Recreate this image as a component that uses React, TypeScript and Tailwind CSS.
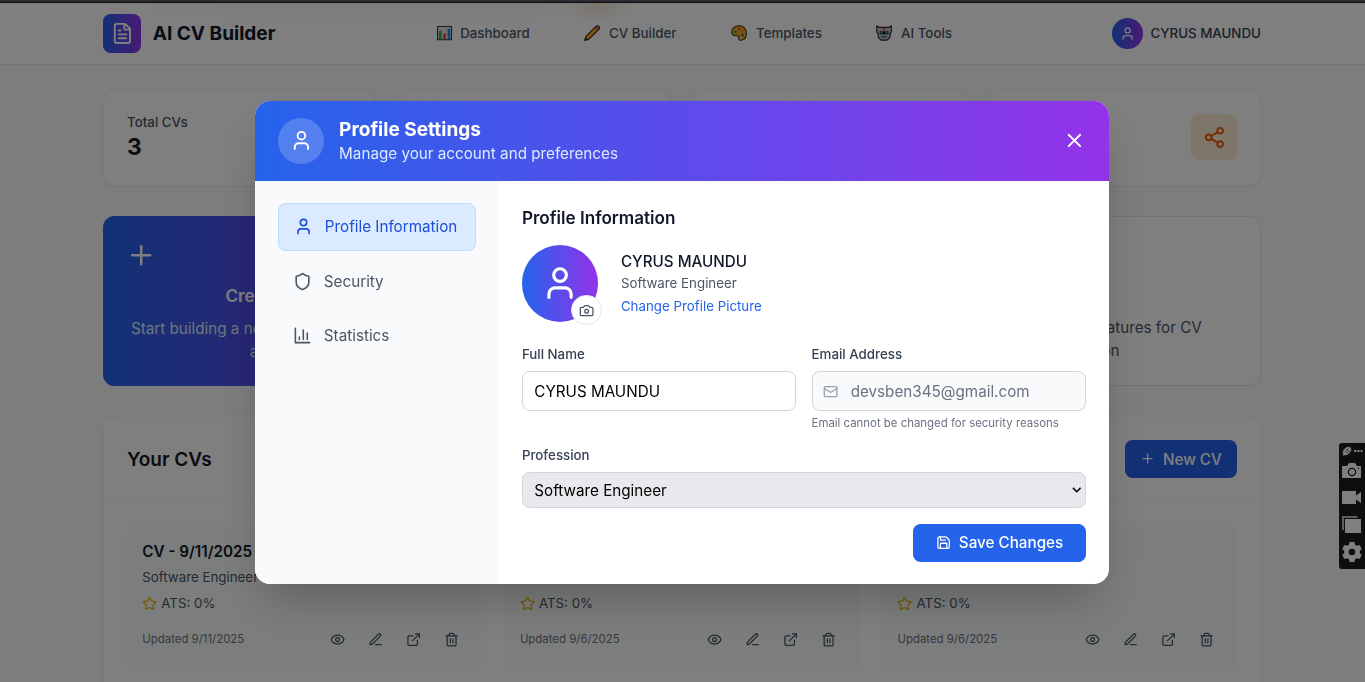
import React from "react";
import {
  Camera,
  ExternalLink,
  Eye,
  FileText,
  Mail,
  Plus,
  Save,
  Share2,
  Shield,
  Star,
  Trash2,
  User,
  X,
} from "lucide-react";

function ChartEmoji() {
  return (
    <svg viewBox="0 0 16 16" className="h-[17px] w-[16px]">
      <rect x=".6" y="1" width="14.6" height="14" fill="#dcdce0" stroke="#26262b" strokeWidth="1" />
      <rect x="2.2" y="5.600" width="2.6" height="8.900" fill="#2fae2f" />
      <rect x="6.600" y="8.4" width="2.6" height="6.1" fill="#f0402f" />
      <rect x="11.2" y="3.4" width="2.6" height="11.1" fill="#1c8ff0" />
    </svg>
  );
}

function PencilEmoji() {
  return (
    <svg viewBox="0 0 16 16" className="-ml-px mr-px h-[17px] w-[17px]">
      <path d="M.8 15.200l1-3.800L11.800 1.300Q13.200.2 14.600 1.400Q15.800 2.800 14.700 4.200L4.600 14.200z" fill="#f7b616" stroke="#2a2018" strokeWidth="1.100" strokeLinejoin="round" />
      <path d="M11.800 1.300Q13.200.2 14.600 1.400Q15.800 2.800 14.700 4.200L13.700 5.200 10.900 2.200z" fill="#f0607a" stroke="#2a2018" strokeWidth=".6" />
      <path d="M.8 15.200l.9-3 2.100 2.100z" fill="#2a2018" />
    </svg>
  );
}

function PaletteEmoji() {
  return (
    <svg viewBox="0 0 16 16" className="-ml-px mr-px h-[17px] w-[17px]">
      <path d="M8 .8C3.800.8.700 3.400.700 6.700c0 2.500 1.700 3.900 3.800 3.900 1.600 0 2.700-.2 3.200.6.6 1-.6 1.900 0 3 .4.8 1.300 1 2.300.9 3.200-.4 5.300-3.300 5.300-7C15.300 4 12.200.8 8 .8z" fill="#f5ad18" stroke="#3a2a10" strokeWidth="1" />
      <circle cx="4.300" cy="6.600" r="1.500" fill="#35b044" />
      <circle cx="8.100" cy="4" r="1.500" fill="#ee4438" />
      <circle cx="11.900" cy="5.600" r="1.300" fill="#e99018" />
      <circle cx="11.400" cy="9.800" r="1.500" fill="#2672e6" />
      <circle cx="9.800" cy="12.800" r="1" fill="#d8d8da" />
    </svg>
  );
}

function RobotEmoji() {
  return (
    <svg viewBox="0 0 16 16" className="-ml-px mr-px h-[17px] w-[17px]">
      <path d="M.8.800l2.400 1.600h9.600l2.400-1.600v6l-1 1.200-.5 4.200L11 15H5l-2.700-2.800L1.800 8l-1-1.200z" fill="#c0c2c9" stroke="#26262a" strokeWidth="1.100" strokeLinejoin="round" />
      <path d="M7.200 2.600h1.600v3H7.200z" fill="#ee4438" />
      <path d="M3.600 6.300h8.800v3H3.600z" fill="#1c1c20" />
      <path d="M4.600 7h1.700v1.500H4.600zM9.700 7h1.700v1.500H9.700z" fill="#35c8f0" />
      <path d="M5.600 11.700h4.800" stroke="#303036" strokeWidth="1.100" />
    </svg>
  );
}

const navItems = [
  { label: "Dashboard", icon: <ChartEmoji />, className: "w-[99px]" },
  { label: "CV Builder", icon: <PencilEmoji />, className: "w-[98px]" },
  { label: "Templates", icon: <PaletteEmoji />, className: "w-[96px]" },
  { label: "AI Tools", icon: <RobotEmoji />, className: "w-[80px]" },
];

function Header() {
  return (
    <header className="h-[65px] border-b border-gray-200 bg-white bg-[radial-gradient(ellipse_34px_20px_at_628px_2px,#f4ead6,transparent),radial-gradient(ellipse_300px_24px_at_400px_0px,#f6f6f8,transparent)] pr-px">
      <div className="mx-auto flex h-16 w-[1216px] items-center justify-between">
        <div className="flex w-[351px] items-center gap-3">
          <div className="flex h-10 w-10 items-center justify-center rounded-lg bg-linear-to-r/srgb from-[#2563eb] to-[#9333ea] text-white">
            <FileText size={24} />
          </div>
          <span className="pt-px text-xl font-bold text-gray-900">AI CV Builder</span>
        </div>
        <nav className="flex flex-1 gap-[56.4px]">
          {navItems.map((item) => (
            <a key={item.label} className={`flex items-center gap-2 text-sm font-medium whitespace-nowrap text-gray-600 ${item.className}`}>
              {item.icon}
              {item.label}
            </a>
          ))}
        </nav>
        <div className="flex items-center gap-2">
          <div className="flex h-8 w-8 items-center justify-center rounded-full bg-linear-to-r/srgb from-[#2563eb] to-[#9333ea] text-white">
            <User size={16} />
          </div>
          <span className="text-sm font-medium text-gray-700">CYRUS MAUNDU</span>
        </div>
      </div>
    </header>
  );
}

const cardBase = "rounded-xl border border-gray-100 bg-white shadow-xs";

function Stats() {
  return (
    <section className="mb-8 grid grid-cols-4 gap-6">
      <div className={`${cardBase} h-[101px] px-6 py-[23px]`}>
        <p className="text-sm font-medium text-gray-600">Total CVs</p>
        <p className="text-2xl font-bold text-gray-900">3</p>
      </div>
      <div className={cardBase} />
      <div className={cardBase} />
      <div className={`${cardBase} flex items-center justify-end px-6 pb-px`}>
        <div className="flex h-12 w-12 items-center justify-center rounded-lg bg-[#ffedd5] text-[#ea580c]">
          <Share2 size={24} />
        </div>
      </div>
    </section>
  );
}

function QuickActions() {
  return (
    <section className="mb-8 grid grid-cols-3 gap-6">
      <button className="flex h-[178px] flex-col rounded-xl bg-linear-to-r/srgb from-[#2563eb] to-[#9333ea] p-[25px] text-white">
        <Plus size={32} className="mb-[13px] -ml-px shrink-0" />
        <h3 className="mb-[9px] w-full text-center text-lg font-semibold">Create New CV</h3>
        <p className="-mb-1 w-full pr-px text-center whitespace-nowrap text-blue-100">
          Start building a new professional CV with AI
          <br />
          assistance
        </p>
      </button>
      <div className={cardBase} />
      <button className="flex h-[178px] flex-col rounded-xl border border-gray-200 bg-white p-6 pt-[69px]">
        <h3 className="mb-2 h-7 w-full text-lg font-semibold text-gray-900">AI Tools</h3>
        <p className="w-full pr-1 text-center whitespace-nowrap text-gray-600">
          Explore AI-powered features for CV
          <br />
          <span className="pl-1">optimization</span>
        </p>
      </button>
    </section>
  );
}

const cvs = [
  { title: "CV - 9/11/2025", role: "Software Engineer", updated: "Updated 9/11/2025" },
  { title: "CV - 9/6/2025", role: "Data Scientist", updated: "Updated 9/6/2025" },
  { title: "CV - 9/6/2025", role: "Data Scientist", updated: "Updated 9/6/2025" },
];

function EditIcon({ size }: { size: number }) {
  return (
    <svg viewBox="0 0 24 24" width={size} height={size} fill="none" stroke="currentColor" strokeWidth="2" strokeLinecap="round" strokeLinejoin="round">
      <path d="M12 20h9M16.500 3.500a2.120 2.120 0 0 1 3 3L7 19l-4 1 1-4Z" />
    </svg>
  );
}

function CvList() {
  return (
    <section className={`${cardBase} h-[400px]`}>
      <div className="flex items-center justify-between border-b border-gray-100 p-6">
        <h2 className="pt-0.5 text-xl font-semibold text-gray-900">Your CVs</h2>
        <button className="flex h-10 items-center gap-2 rounded-lg bg-[#2563eb] px-4 font-medium text-white">
          <Plus size={16} />
          <span className="pt-[2px]">New CV</span>
        </button>
      </div>
      <div className="grid grid-cols-3 gap-6 p-6">
        {cvs.map((cv, i) => (
          <article key={i} className="rounded-lg bg-[#f9fbfb] px-4 pt-[17px] pb-4">
            <h3 className="font-semibold text-gray-900">{cv.title}</h3>
            <p className="mt-1 text-sm text-gray-600">{cv.role}</p>
            <p className="mt-2 flex items-center gap-1 text-sm text-gray-600">
              <Star size={16} className="text-[#eab308]" />
              ATS: 0%
            </p>
            <div className="mt-3 flex items-center justify-between">
              <span className="text-xs text-gray-500">{cv.updated}</span>
              <div className="flex gap-2 text-gray-600">
                {[Eye, EditIcon, ExternalLink, Trash2].map((Icon, k) => (
                  <button key={k} className="p-2">
                    <Icon size={16} />
                  </button>
                ))}
              </div>
            </div>
          </article>
        ))}
      </div>
    </section>
  );
}

function ChartIcon() {
  return (
    <svg viewBox="0 0 24 24" className="h-5 w-5" fill="none" stroke="currentColor" strokeWidth="2" strokeLinecap="round" strokeLinejoin="round">
      <path d="M3 3v18h18M18 17V9M13 17V5M8 17v-3" />
    </svg>
  );
}

function ProfileModal() {
  return (
    <div className="w-[896.6px] overflow-hidden rounded-2xl bg-white shadow-2xl">
      <div className="flex h-[84px] items-center justify-between bg-linear-to-r/srgb from-[#2563eb] to-[#9333ea] px-6 text-white">
        <div className="flex items-center gap-4">
          <div className="flex h-12 w-12 items-center justify-center rounded-full bg-white/20">
            <User size={24} />
          </div>
          <div className="-mb-px pt-px">
            <h2 className="text-xl font-bold">Profile Settings</h2>
            <p className="-mt-[0.5px] text-blue-100">Manage your account and preferences</p>
          </div>
        </div>
        <button>
          <X size={24} />
        </button>
      </div>
      <div className="flex">
        <aside className="flex w-64 flex-col gap-2 bg-gray-50 p-6 text-gray-600">
          <button className="-mt-[0.5px] flex items-center gap-3 rounded-lg border border-[#bfdbfe] bg-[#dbeafe] px-4 pt-3 pb-[12.5px] whitespace-nowrap text-[#1d4ed8]">
            <User size={20} />
            <span className="-mb-px pt-px">Profile Information</span>
          </button>
          <button className="flex items-center gap-3 px-4 py-3">
            <Shield size={20} />
            <span className="-mb-px pt-px">Security</span>
          </button>
          <button className="flex items-center gap-3 px-4 py-3">
            <ChartIcon />
            <span className="-mb-px pt-px">Statistics</span>
          </button>
        </aside>
        <div className="flex-1 p-6">
          <h3 className="mb-[15px] pt-px text-lg font-semibold text-gray-900">Profile Information</h3>
          <div className="mb-6 flex items-center gap-6">
            <div className="relative flex h-20 w-20 items-center justify-center rounded-full bg-linear-to-r/srgb from-[#2563eb] to-[#9333ea] text-white">
              <User size={40} />
              <button className="absolute -right-1 -bottom-1 flex h-8 w-8 items-center justify-center rounded-full border border-gray-200 bg-white text-gray-600">
                <Camera size={16} />
              </button>
            </div>
            <div>
              <h4 className="font-medium text-gray-900">CYRUS MAUNDU</h4>
              <p className="pt-[0.5px] text-sm text-gray-600">Software Engineer</p>
              <button className="mt-1 block text-sm text-[#2563eb]">Change Profile Picture</button>
            </div>
          </div>
          <div className="grid grid-cols-2 gap-4">
            <div>
              <label className="mb-[7px] block pt-px text-sm font-medium text-gray-700">Full Name</label>
              <div className="rounded-lg border border-gray-300 px-3 pt-[9px] pb-[7px] text-black">CYRUS MAUNDU</div>
            </div>
            <div>
              <label className="mb-[7px] block pt-px text-sm font-medium text-gray-700">Email Address</label>
              <div className="flex items-center gap-[13px] rounded-lg border border-gray-300 bg-gray-50 py-2 pl-[11px] text-gray-500">
                <Mail size={16} className="text-gray-400" />
                <span className="-mb-px pt-px">devsben345@gmail.com</span>
              </div>
              <p className="-mb-px pt-[5px] text-xs text-gray-500">Email cannot be changed for security reasons</p>
            </div>
          </div>
          <label className="mt-4 mb-[7px] block pt-px text-sm font-medium text-gray-700">Profession</label>
          <div className="flex h-[38px] items-center justify-between rounded-lg border border-gray-300 bg-[#e9e9ed] pr-1 pl-3 text-black">
            <span className="pt-[2px]">Software Engineer</span>
            <svg viewBox="0 0 10 8" className="h-2 w-2.5" fill="none" stroke="currentColor" strokeWidth="1.600">
              <path d="M1 2l4 4 4-4" />
            </svg>
          </div>
          <div className="mt-[16.5px] -mb-[0.5px] flex justify-end">
            <button className="flex h-10 items-center gap-2 rounded-lg bg-[#2563eb] px-6 font-medium text-white">
              <Save size={16} />
              <span className="pt-px">Save Changes</span>
            </button>
          </div>
        </div>
      </div>
    </div>
  );
}

function CaptureToolbar() {
  return (
    <div className="fixed top-[443px] right-0 h-[126px] w-[26px] overflow-hidden rounded-l-[3px] bg-[#1c1c1c]">
      <svg viewBox="0 0 26 126" className="h-[126px] w-[26px]" fill="#fff">
        <ellipse cx="8" cy="8" rx="4.800" ry="3.300" transform="rotate(-45 8 8)" />
        <path d="M6.500 8.500l3-2.800M7.800 10.200l2.700-2.500" stroke="#1c1c1c" strokeWidth=".8" />
        <path d="M3.800 13l1.200-3.400 2 2z" />
        <path d="M15 7h2.300v2H15zM18.300 7h2.300v2h-2.300zM21.500 7h2v2h-2z" />
        <path d="M3 23h5l2-3h6l2 3h4v12H3z" />
        <circle cx="13" cy="29" r="3.600" fill="#fff" stroke="#1c1c1c" strokeWidth="1.300" />
        <circle cx="19.500" cy="25.500" r=".7" fill="#1c1c1c" />
        <path d="M3 48h14v4.500l5-3.500v11l-5-3.500V61H3z" />
        <path d="M3 73h15.500v2H5v12H3z" fill="#bbb" />
        <path d="M6 76h16v14H6z" />
        <path d="M10.600 99h4.800l.7 2.700 1.800 1 2.600-.8 2.300 4-2 1.900v2.400l2 1.900-2.300 4-2.600-.8-1.800 1-.7 2.700h-4.800l-.7-2.700-1.800-1-2.600.8-2.300-4 2-1.900v-2.400l-2-1.900 2.300-4 2.600.8 1.800-1z" />
        <circle cx="13" cy="109" r="3.300" fill="#1c1c1c" />
      </svg>
    </div>
  );
}

export default function App() {
  return (
    <div className="h-[682px] overflow-hidden font-['Inter',sans-serif]">
      <div className="h-[3px] border-b border-[#0c0c0d] bg-[#2b2a33]" />
      <div className="grid h-[713.2px] overflow-hidden [zoom:0.952]">
        <div className="col-start-1 row-start-1 h-[713.2px] overflow-hidden bg-[#f8faf9]">
          <Header />
          <main className="pt-[26px] pr-px">
            <div className="mx-auto w-[1216px]">
              <Stats />
              <QuickActions />
              <CvList />
            </div>
          </main>
        </div>
        <div className="z-10 col-start-1 row-start-1 flex h-[713.2px] items-center justify-center bg-black/50 pt-[0.2px] pr-[0.8px]">
          <ProfileModal />
        </div>
      </div>
      <CaptureToolbar />
    </div>
  );
}
